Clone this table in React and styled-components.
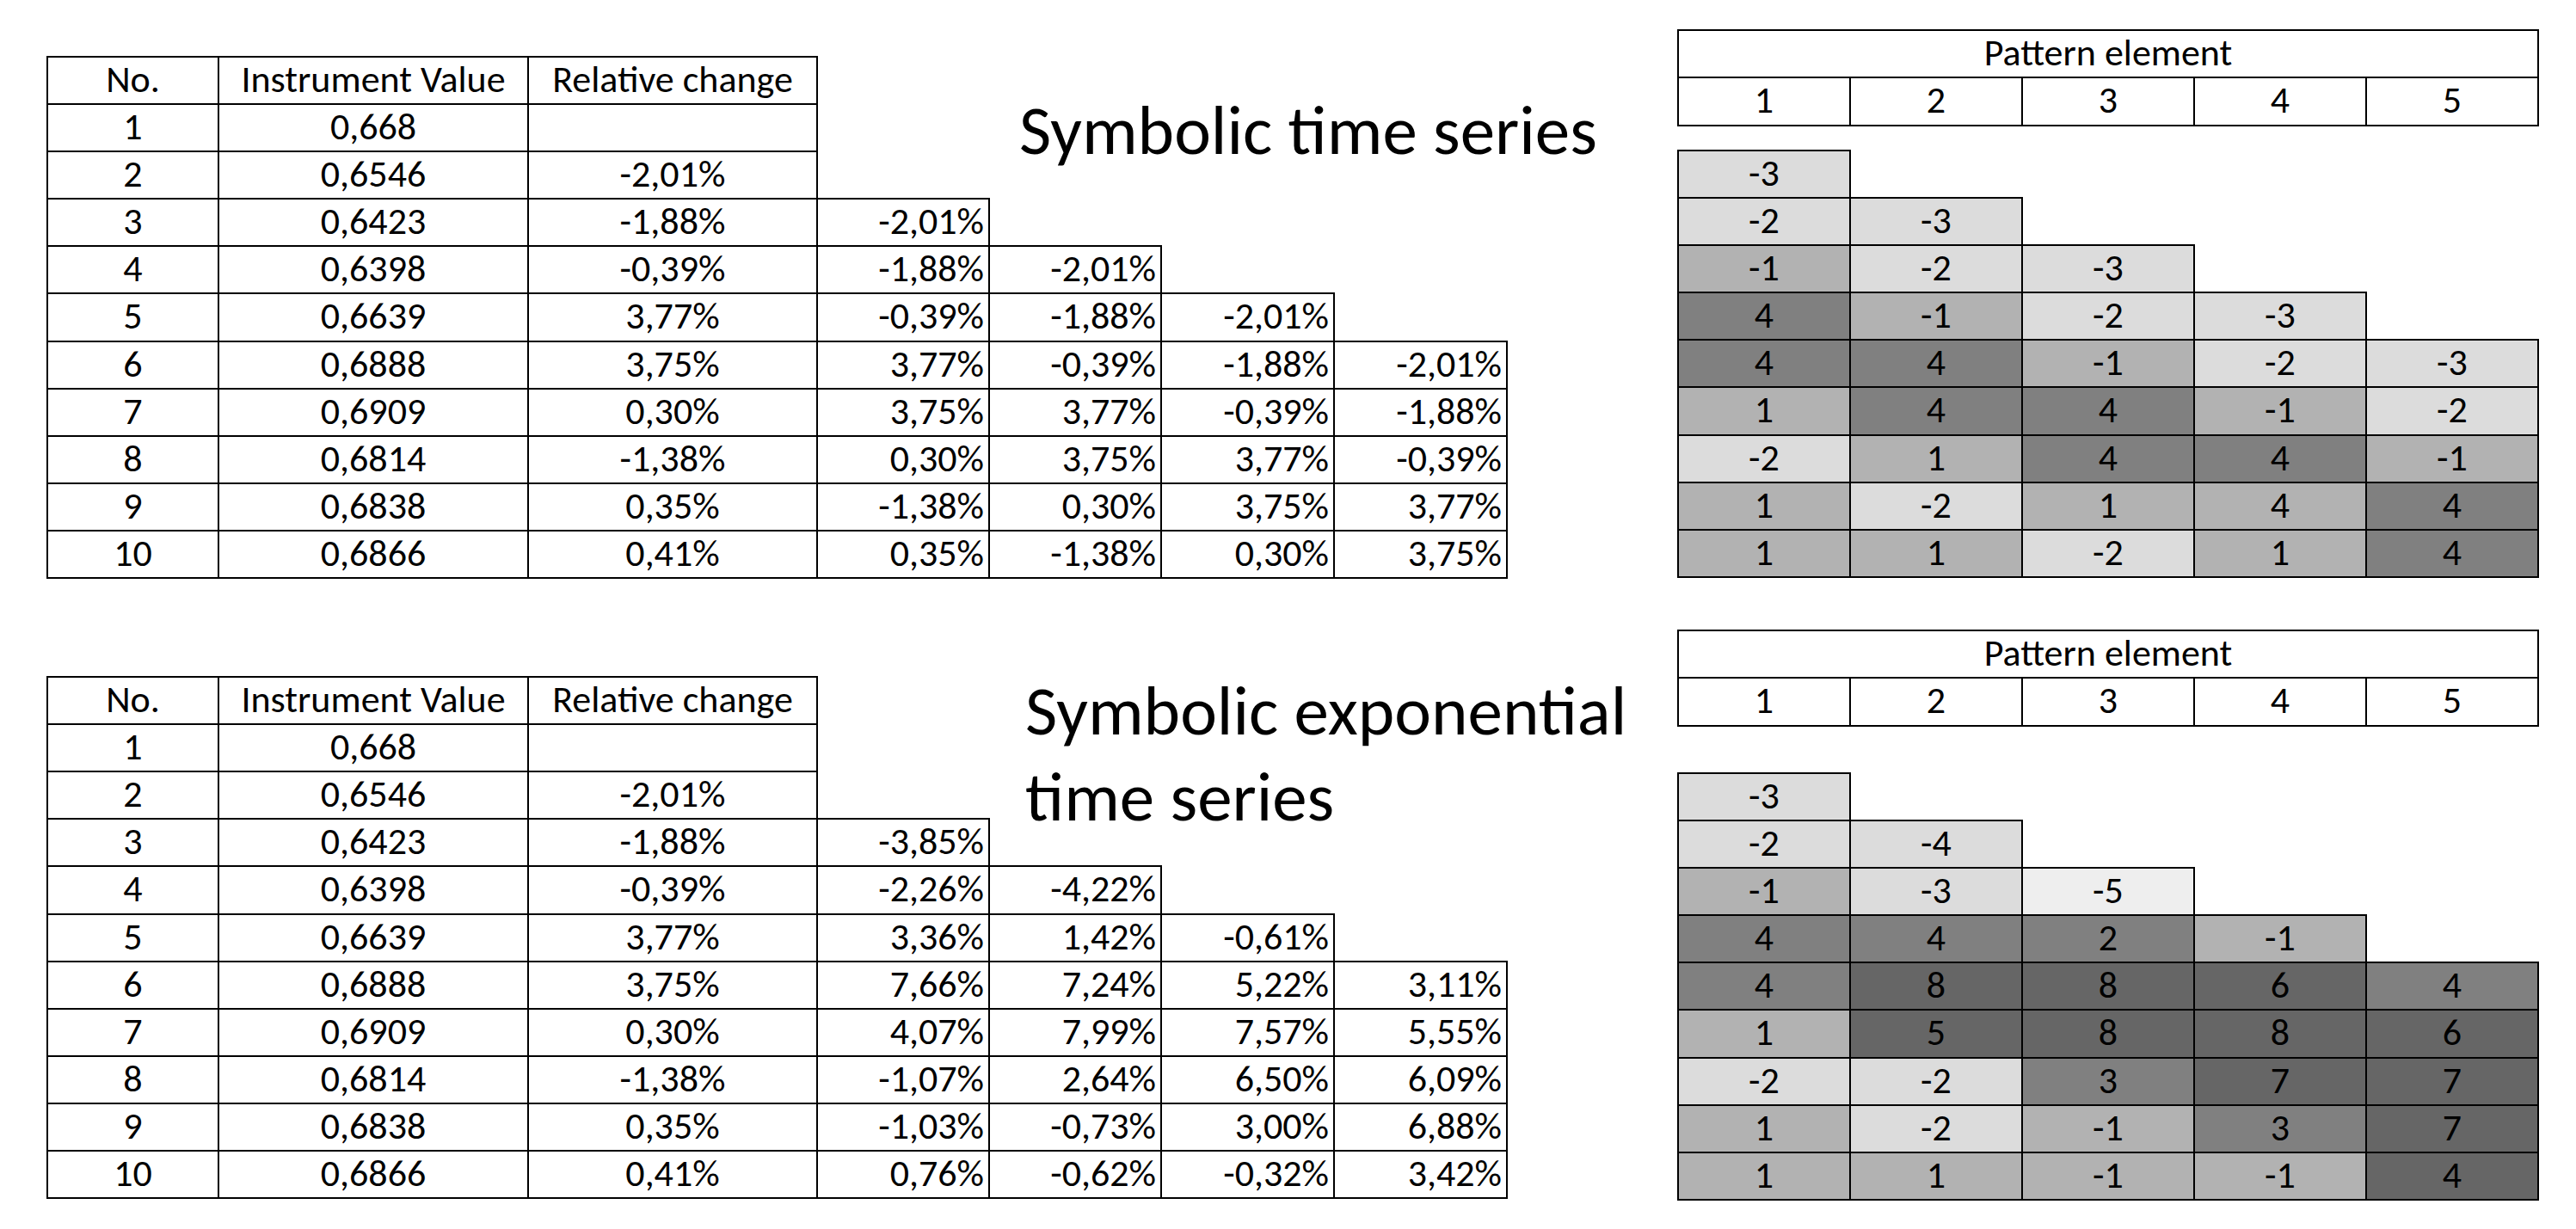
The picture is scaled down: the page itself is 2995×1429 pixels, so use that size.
import React from "react";
import styled, { createGlobalStyle } from "styled-components";

const ROW = 55.1;
const COLS = [199, 360, 336, 200, 200, 201, 201];
const SHADES = ["#eeeeee", "#dcdcdc", "#b2b2b2", "#808080", "#666666"];

const GlobalStyle = createGlobalStyle`
  html, body {
    margin: 0;
    padding: 0;
    background: #ffffff;
  }
  body {
    font-family: Carlito, Calibri, Lato, "Liberation Sans", sans-serif;
    color: #000000;
  }
`;

// --- data ---

const HEAD = ["No.", "Instrument Value", "Relative change"];
const VALUES = ["0,668", "0,6546", "0,6423", "0,6398", "0,6639", "0,6888", "0,6909", "0,6814", "0,6838", "0,6866"];
const CHANGE = ["", "-2,01%", "-1,88%", "-0,39%", "3,77%", "3,75%", "0,30%", "-1,38%", "0,35%", "0,41%"];

const plainLags = [
  [],
  [],
  ["-2,01%"],
  ["-1,88%", "-2,01%"],
  ["-0,39%", "-1,88%", "-2,01%"],
  ["3,77%", "-0,39%", "-1,88%", "-2,01%"],
  ["3,75%", "3,77%", "-0,39%", "-1,88%"],
  ["0,30%", "3,75%", "3,77%", "-0,39%"],
  ["-1,38%", "0,30%", "3,75%", "3,77%"],
  ["0,35%", "-1,38%", "0,30%", "3,75%"],
];

const expLags = [
  [],
  [],
  ["-3,85%"],
  ["-2,26%", "-4,22%"],
  ["3,36%", "1,42%", "-0,61%"],
  ["7,66%", "7,24%", "5,22%", "3,11%"],
  ["4,07%", "7,99%", "7,57%", "5,55%"],
  ["-1,07%", "2,64%", "6,50%", "6,09%"],
  ["-1,03%", "-0,73%", "3,00%", "6,88%"],
  ["0,76%", "-0,62%", "-0,32%", "3,42%"],
];

// value:shade
const plainPattern = [
  "-3:1",
  "-2:1 -3:1",
  "-1:2 -2:1 -3:1",
  "4:3 -1:2 -2:1 -3:1",
  "4:3 4:3 -1:2 -2:1 -3:1",
  "1:2 4:3 4:3 -1:2 -2:1",
  "-2:1 1:2 4:3 4:3 -1:2",
  "1:2 -2:1 1:2 4:2 4:3",
  "1:2 1:2 -2:1 1:2 4:3",
];

const expPattern = [
  "-3:1",
  "-2:1 -4:1",
  "-1:2 -3:1 -5:0",
  "4:3 4:3 2:3 -1:2",
  "4:3 8:4 8:4 6:4 4:3",
  "1:2 5:4 8:4 8:4 6:4",
  "-2:1 -2:1 3:3 7:4 7:4",
  "1:2 -2:1 -1:2 3:3 7:4",
  "1:2 1:2 -1:2 -1:2 4:4",
];

const panels = [
  {
    key: "plain",
    top: 35,
    tableOffset: 31,
    gridGap: 29.4,
    title: ["Symbolic time series"],
    titleRows: 2,
    titleX: 35,
    titleY: 36,
    lags: plainLags,
    pattern: plainPattern,
  },
  {
    key: "exp",
    top: 61,
    tableOffset: 54,
    gridGap: 55.4,
    title: ["Symbolic exponential", "time series"],
    titleRows: 4,
    titleX: 42,
    titleY: -10,
    lags: expLags,
    pattern: expPattern,
  },
];

// --- styles ---

const Page = styled.div`
  width: 2995px;
  height: 1429px;
  display: flex;
  flex-direction: column;
  overflow: hidden;
`;

const Panel = styled.section`
  display: flex;
  align-items: flex-start;
  padding-left: 55px;
  margin-top: ${(p) => p.$top}px;
`;

const SeriesTable = styled.div`
  flex: none;
  display: grid;
  grid-template-columns: ${COLS.map((c) => c + "px").join(" ")};
  grid-template-rows: repeat(11, ${ROW}px);
  margin-top: ${(p) => p.$offset}px;
`;

const Cell = styled.div`
  margin: -1px;
  border: 2px solid #000000;
  background: ${(p) => p.$bg || "#ffffff"};
  font-size: 44px;
  line-height: 51px;
  text-align: ${(p) => (p.$right ? "right" : "center")};
  padding-right: ${(p) => (p.$right ? 5 : 0)}px;
  white-space: nowrap;
  overflow: hidden;
`;

const TableCell = styled(Cell)`
  grid-row: ${(p) => p.$r};
  grid-column: ${(p) => p.$c};
`;

const Title = styled.h2`
  grid-row: 1 / span ${(p) => p.$rows};
  grid-column: 5 / span 3;
  align-self: start;
  justify-self: start;
  margin: ${(p) => p.$dy}px 0 0 ${(p) => p.$dx}px;
  font-size: 81px;
  font-weight: 400;
  line-height: 100px;
  white-space: nowrap;
`;

const PatternBlock = styled.div`
  flex: none;
  display: flex;
  flex-direction: column;
  margin-left: 199px;
`;

const PatternHead = styled.div`
  display: grid;
  grid-template-columns: repeat(5, 200px);
  grid-template-rows: repeat(2, 55.3px);
`;

const HeadSpan = styled(Cell)`
  grid-column: 1 / -1;
`;

const PatternGrid = styled.div`
  display: grid;
  grid-template-columns: repeat(5, 200px);
  grid-template-rows: repeat(9, ${ROW}px);
  margin-top: ${(p) => p.$gap}px;
`;

const Blank = styled.div``;

// --- components ---

function Series({ lags }) {
  const cells = [];
  HEAD.forEach((h, i) =>
    cells.push(
      <TableCell key={`h${i}`} $r={1} $c={i + 1}>
        {h}
      </TableCell>
    )
  );
  VALUES.forEach((v, i) => {
    const r = i + 2;
    cells.push(
      <TableCell key={`n${i}`} $r={r} $c={1}>
        {i + 1}
      </TableCell>,
      <TableCell key={`v${i}`} $r={r} $c={2}>
        {v}
      </TableCell>,
      <TableCell key={`c${i}`} $r={r} $c={3}>
        {CHANGE[i]}
      </TableCell>
    );
    lags[i].forEach((l, j) =>
      cells.push(
        <TableCell key={`l${i}-${j}`} $r={r} $c={4 + j} $right>
          {l}
        </TableCell>
      )
    );
  });
  return cells;
}

function Pattern({ rows, gap }) {
  return (
    <PatternBlock>
      <PatternHead>
        <HeadSpan>Pattern element</HeadSpan>
        {[1, 2, 3, 4, 5].map((n) => (
          <Cell key={n}>{n}</Cell>
        ))}
      </PatternHead>
      <PatternGrid $gap={gap}>
        {rows.map((row, i) => {
          const items = row.split(" ").map((s) => s.split(":"));
          const out = items.map(([v, s], j) => (
            <Cell key={`${i}-${j}`} $bg={SHADES[+s]}>
              {v}
            </Cell>
          ));
          for (let j = items.length; j < 5; j++) out.push(<Blank key={`${i}-b${j}`} />);
          return out;
        })}
      </PatternGrid>
    </PatternBlock>
  );
}

export default function App() {
  return (
    <>
      <GlobalStyle />
      <Page>
        {panels.map((p) => (
          <Panel key={p.key} $top={p.top}>
            <SeriesTable $offset={p.tableOffset}>
              <Series lags={p.lags} />
              <Title $rows={p.titleRows} $dx={p.titleX} $dy={p.titleY}>
                {p.title.map((line, i) => (
                  <React.Fragment key={i}>
                    {i > 0 && <br />}
                    {line}
                  </React.Fragment>
                ))}
              </Title>
            </SeriesTable>
            <Pattern rows={p.pattern} gap={p.gridGap} />
          </Panel>
        ))}
      </Page>
    </>
  );
}
